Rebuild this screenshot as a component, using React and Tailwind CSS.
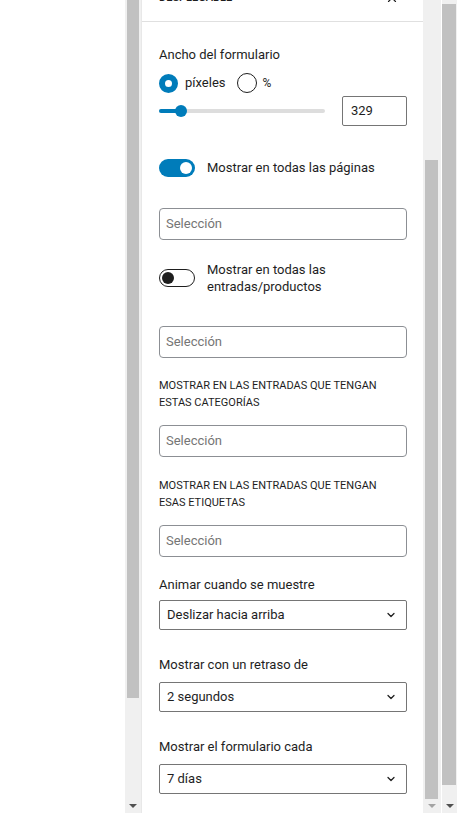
import { ChevronDown, X } from 'lucide-react';

const font = { fontFamily: 'Roboto, "Noto Sans", sans-serif' };

const Toggle = ({ on }) => (
    <div
        className={
            on
                ? 'relative h-[18px] w-[36px] shrink-0 rounded-full bg-[#007cba]'
                : 'relative h-[18px] w-[36px] shrink-0 rounded-full border border-[#1e1e1e] bg-white'
        }
    >
        {on ? (
            <span className="absolute right-[3px] top-[3px] h-[12px] w-[12px] rounded-full bg-white" />
        ) : (
            <span className="absolute left-[2px] top-[2px] h-[12px] w-[12px] rounded-full bg-[#1e1e1e]" />
        )}
    </div>
);

const TextBox = ({ className }) => (
    <div className={`flex h-[32px] items-center rounded-[4px] border border-[#8c8f94] px-[6px] text-[13px] text-[#757575] ${className}`}>
        Selección
    </div>
);

const SelectBox = ({ value, className }) => (
    <div className={`flex h-[30px] items-center justify-between rounded-[2px] border border-[#757575] pl-[7px] pr-[9px] text-[13px] text-[#1e1e1e] ${className}`}>
        <span>{value}</span>
        <ChevronDown size={12} strokeWidth={2.5} className="text-[#1e1e1e]" />
    </div>
);

const Arrow = ({ color }) => (
    <div className="flex h-[14px] items-center justify-center">
        <div className={`h-0 w-0 border-x-[4px] border-t-[4px] border-x-transparent ${color}`} />
    </div>
);

const App = () => {
    return (
        <div className="flex h-[813px] w-[457px] overflow-hidden bg-white" style={font}>
            {/* left blank area */}
            <div className="w-[125px] shrink-0 bg-white" />

            {/* left scrollbar */}
            <div className="flex w-[16px] shrink-0 flex-col bg-[#f0f0f0]">
                <div className="mx-[2px] h-[698px] bg-[#c1c1c1]" />
                <div className="flex-1" />
                <Arrow color="border-t-[#505050]" />
            </div>

            {/* panel */}
            <div className="flex w-[282px] shrink-0 flex-col border-l border-[#e8e8e8] bg-white">
                {/* header, scrolled partly out of view */}
                <div className="h-[22px] shrink-0 overflow-hidden border-b border-[#e0e0e0]">
                    <div className="-mt-[10px] flex items-center justify-between pl-[17px] pr-[24px] text-[11px] leading-4 font-medium uppercase text-[#1e1e1e]">
                        <span>Desplegable</span>
                        <X size={14} strokeWidth={2} />
                    </div>
                </div>

                {/* content */}
                <div className="pl-[17px] pr-[16px] text-[13px] text-[#1e1e1e]">
                    <div className="mt-[24px] leading-[18px]">Ancho del formulario</div>

                    <div className="mt-[9px] flex h-[20px] items-center">
                        <span className="h-[19px] w-[19px] rounded-full border-[6px] border-[#007cba] bg-white" />
                        <span className="ml-[7px]">píxeles</span>
                        <span className="ml-[11px] h-[20px] w-[20px] rounded-full border border-[#1e1e1e]" />
                        <span className="ml-[6px] text-[12px]">%</span>
                    </div>

                    <div className="mt-[3px] flex h-[30px] items-center">
                        <div className="relative h-[4px] w-[166px] rounded-full bg-[#dddddd]">
                            <div className="absolute left-0 top-0 h-[4px] w-[22px] rounded-full bg-[#007cba]" />
                            <div className="absolute left-[16px] -top-[4px] h-[12px] w-[12px] rounded-full bg-[#007cba]" />
                        </div>
                        <div className="ml-auto flex h-[30px] w-[65px] items-center rounded-[2px] border border-[#757575] px-[8px]">
                            329
                        </div>
                    </div>

                    <div className="mt-[33px] flex h-[18px] items-center">
                        <Toggle on />
                        <span className="ml-[12px]">Mostrar en todas las páginas</span>
                    </div>

                    <TextBox className="mt-[31px]" />

                    <div className="mt-[21px] flex items-center">
                        <Toggle />
                        <span className="ml-[12px] leading-[17px]">
                            Mostrar en todas las
                            <br />
                            entradas/productos
                        </span>
                    </div>

                    <TextBox className="mt-[31px]" />

                    <div className="mt-[19px] text-[11px] leading-[17px] uppercase">
                        Mostrar en las entradas que tengan
                        <br />
                        estas categorías
                    </div>

                    <TextBox className="mt-[14px]" />

                    <div className="mt-[20px] text-[11px] leading-[17px] uppercase">
                        Mostrar en las entradas que tengan
                        <br />
                        esas etiquetas
                    </div>

                    <TextBox className="mt-[14px]" />

                    <div className="mt-[19px] leading-[18px]">Animar cuando se muestre</div>
                    <SelectBox value="Deslizar hacia arriba" className="mt-[6px]" />

                    <div className="mt-[26px] leading-[18px]">Mostrar con un retraso de</div>
                    <SelectBox value="2 segundos" className="mt-[8px]" />

                    <div className="mt-[26px] leading-[18px]">Mostrar el formulario cada</div>
                    <SelectBox value="7 días" className="mt-[8px]" />
                </div>
            </div>

            {/* inner scrollbar */}
            <div className="flex w-[18px] shrink-0 flex-col bg-[#f0f0f0]">
                <div className="h-[160px]" />
                <div className="ml-[2px] mr-[3px] h-[640px] bg-[#c1c1c1]" />
                <Arrow color="border-t-[#a3a3a3]" />
            </div>

            {/* outer scrollbar */}
            <div className="flex w-[16px] shrink-0 flex-col border-l border-white bg-[#f0f0f0]">
                <div className="h-[4px]" />
                <div className="mr-[1px] h-[781px] bg-[#c1c1c1]" />
                <div className="flex-1" />
                <Arrow color="border-t-[#505050]" />
            </div>
        </div>
    );
};

export default App;
